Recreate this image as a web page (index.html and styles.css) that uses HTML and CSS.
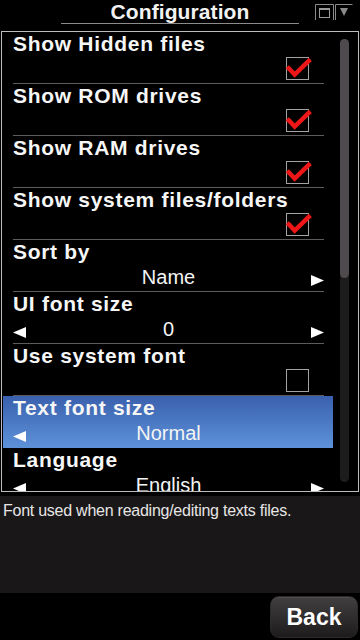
FILE: index.html
```html
<!DOCTYPE html>
<html>
<head>
<meta charset="utf-8">
<title>Configuration</title>
<link rel="stylesheet" href="styles.css">
</head>
<body>
<div class="screen">
  <header class="topbar">
    <div class="side"></div>
    <h1 class="title">Configuration</h1>
    <div class="winctl">
      <svg class="wicons" width="40" height="18" viewBox="0 0 40 18">
        <path d="M1.5 17V1.5H19.5V17" fill="none" stroke="#8a8a8a" stroke-width="1"/>
        <path d="M21.5 17V1.5H38.5" fill="none" stroke="#8a8a8a" stroke-width="1"/>
        <rect x="5.5" y="5.5" width="10" height="9" fill="none" stroke="#9a9a9a" stroke-width="1"/>
        <rect x="5" y="5" width="11" height="2" fill="#9a9a9a"/>
        <polygon points="26,5 34,5 30,13" fill="#8a8a8a"/>
      </svg>
    </div>
  </header>

  <div class="frame">
    <div class="list">
      <div class="row">
        <div class="inner">
          <div class="label">Show Hidden files</div>
          <div class="checkline">
            <svg class="cb" width="26" height="24" viewBox="0 0 26 24"><rect x="0.5" y="1.5" width="22" height="22" fill="none" stroke="#a3a3a3"/><polyline points="1.3,10.7 8.7,18.6 24.3,3.3" fill="none" stroke="#ee1616" stroke-width="4.5"/></svg>
          </div>
        </div>
      </div>
      <div class="row">
        <div class="inner">
          <div class="label">Show ROM drives</div>
          <div class="checkline">
            <svg class="cb" width="26" height="24" viewBox="0 0 26 24"><rect x="0.5" y="1.5" width="22" height="22" fill="none" stroke="#a3a3a3"/><polyline points="1.3,10.7 8.7,18.6 24.3,3.3" fill="none" stroke="#ee1616" stroke-width="4.5"/></svg>
          </div>
        </div>
      </div>
      <div class="row">
        <div class="inner">
          <div class="label">Show RAM drives</div>
          <div class="checkline">
            <svg class="cb" width="26" height="24" viewBox="0 0 26 24"><rect x="0.5" y="1.5" width="22" height="22" fill="none" stroke="#a3a3a3"/><polyline points="1.3,10.7 8.7,18.6 24.3,3.3" fill="none" stroke="#ee1616" stroke-width="4.5"/></svg>
          </div>
        </div>
      </div>
      <div class="row">
        <div class="inner">
          <div class="label">Show system files/folders</div>
          <div class="checkline">
            <svg class="cb" width="26" height="24" viewBox="0 0 26 24"><rect x="0.5" y="1.5" width="22" height="22" fill="none" stroke="#a3a3a3"/><polyline points="1.3,10.7 8.7,18.6 24.3,3.3" fill="none" stroke="#ee1616" stroke-width="4.5"/></svg>
          </div>
        </div>
      </div>
      <div class="row">
        <div class="inner">
          <div class="label">Sort by</div>
          <div class="valueline">
            <svg class="arrow hidden" width="13" height="11" viewBox="0 0 13 11"><polygon points="13,0 0,5.5 13,11" fill="#fff"/></svg>
            <span class="value">Name</span>
            <svg class="arrow" width="13" height="11" viewBox="0 0 13 11"><polygon points="0,0 13,5.5 0,11" fill="#fff"/></svg>
          </div>
        </div>
      </div>
      <div class="row">
        <div class="inner">
          <div class="label">UI font size</div>
          <div class="valueline">
            <svg class="arrow" width="13" height="11" viewBox="0 0 13 11"><polygon points="13,0 0,5.5 13,11" fill="#fff"/></svg>
            <span class="value">0</span>
            <svg class="arrow" width="13" height="11" viewBox="0 0 13 11"><polygon points="0,0 13,5.5 0,11" fill="#fff"/></svg>
          </div>
        </div>
      </div>
      <div class="row">
        <div class="inner">
          <div class="label">Use system font</div>
          <div class="checkline">
            <svg class="cb" width="26" height="24" viewBox="0 0 26 24"><rect x="0.5" y="1.5" width="22" height="22" fill="none" stroke="#a3a3a3"/></svg>
          </div>
        </div>
      </div>
      <div class="row selected">
        <div class="inner">
          <div class="label">Text font size</div>
          <div class="valueline">
            <svg class="arrow" width="13" height="11" viewBox="0 0 13 11"><polygon points="13,0 0,5.5 13,11" fill="#fff"/></svg>
            <span class="value">Normal</span>
            <svg class="arrow hidden" width="13" height="11" viewBox="0 0 13 11"><polygon points="0,0 13,5.5 0,11" fill="#fff"/></svg>
          </div>
        </div>
      </div>
      <div class="row">
        <div class="inner">
          <div class="label">Language</div>
          <div class="valueline">
            <svg class="arrow" width="13" height="11" viewBox="0 0 13 11"><polygon points="13,0 0,5.5 13,11" fill="#fff"/></svg>
            <span class="value">English</span>
            <svg class="arrow" width="13" height="11" viewBox="0 0 13 11"><polygon points="0,0 13,5.5 0,11" fill="#fff"/></svg>
          </div>
        </div>
      </div>
    </div>
    <div class="scrollcol">
      <div class="track"><div class="thumb"></div></div>
    </div>
  </div>

  <div class="desc">Font used when reading/editing texts files.</div>

  <footer class="bottombar">
    <button class="back">Back</button>
  </footer>
</div>
</body>
</html>
```

FILE: styles.css
```css
* { box-sizing: border-box; }

html, body {
  margin: 0;
  padding: 0;
  background: #000;
}

body {
  font-family: "Liberation Sans", Arial, sans-serif;
  color: #f4f4f4;
}

.screen {
  width: 360px;
  height: 640px;
  display: flex;
  flex-direction: column;
  background: #000;
  overflow: hidden;
}

/* header */
.topbar {
  height: 31px;
  flex: none;
  display: grid;
  grid-template-columns: 61px 238px 61px;
}

.title {
  margin: 0;
  height: 24px;
  border-bottom: 1px solid #8c8c8c;
  font-size: 21px;
  line-height: 23px;
  font-weight: bold;
  text-align: center;
  color: #f2f2f2;
  letter-spacing: 0.1px;
}

.winctl {
  padding: 3px 0 0 15px;
}

.wicons { display: block; }

/* frame / list */
.frame {
  height: 461px;
  flex: none;
  margin: 0 1px;
  border: 1px solid #bdbdbd;
  display: flex;
  overflow: hidden;
}

.list {
  width: 331px;
  flex: none;
  padding-left: 1px;
  overflow: hidden;
}

.row {
  height: 52px;
}

.row.selected {
  background: linear-gradient(#3a60ad, #5d92d9);
}

.inner {
  margin: 0 9px 0 10px;
  height: 52px;
  padding-bottom: 3px;
  border-bottom: 1px solid #5c5c5c;
}

.row.selected .inner {
  border-bottom-color: transparent;
}

.label {
  height: 24px;
  font-size: 21px;
  line-height: 24px;
  font-weight: bold;
  letter-spacing: 0.7px;
  white-space: nowrap;
  color: #f6f6f6;
}

.checkline {
  height: 24px;
  display: flex;
  justify-content: flex-end;
  padding-right: 12px;
}

.cb {
  display: block;
  overflow: visible;
}

.valueline {
  height: 24px;
  display: flex;
  align-items: flex-start;
}

.arrow {
  display: block;
  flex: none;
  margin-top: 11px;
}

.arrow.hidden { visibility: hidden; }

.value {
  flex: 1;
  text-align: center;
  font-size: 20px;
  line-height: 24px;
  color: #f4f4f4;
  padding-top: 1px;
}

/* scrollbar */
.scrollcol {
  flex: 1;
  padding: 7px 0 0 7px;
}

.track {
  width: 9px;
  height: 443px;
  border-radius: 4.5px;
  background: #1d1c1d;
}

.thumb {
  width: 9px;
  height: 239px;
  border-radius: 4.5px;
  background: #4e4a4d;
}

/* description */
.desc {
  flex: none;
  height: 97px;
  margin-top: 4px;
  background: #1a1718;
  padding: 6px 3px 0;
  font-size: 16px;
  line-height: 18px;
  letter-spacing: -0.25px;
  color: #e6e6e6;
}

/* bottom */
.bottombar {
  flex: 1;
  display: flex;
  justify-content: flex-end;
  align-items: flex-start;
  padding: 3px 2px 0 0;
}

.back {
  width: 88px;
  height: 42px;
  border-radius: 9px;
  border: 1px solid #2c2a2b;
  background: linear-gradient(#423f40, #1d1b1c);
  box-shadow: inset 0 1px 0 rgba(255,255,255,0.08);
  color: #fff;
  font-family: "Liberation Sans", Arial, sans-serif;
  font-size: 23px;
  font-weight: bold;
  padding: 0;
  line-height: 40px;
}
```
